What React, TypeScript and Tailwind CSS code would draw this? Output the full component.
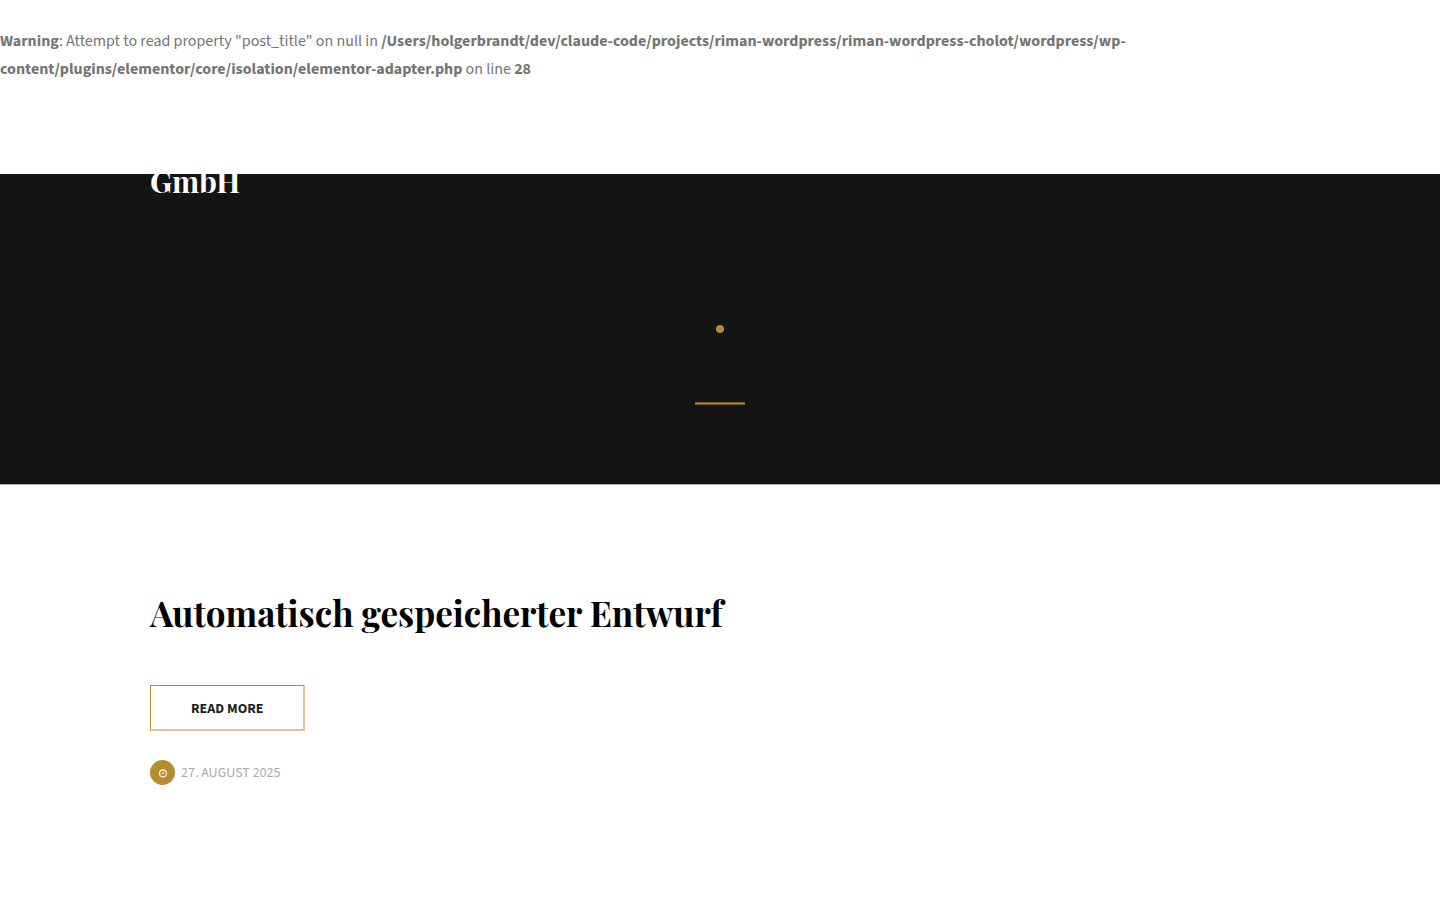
function ClockIcon() {
  return (
    <svg viewBox="0 0 10 10" className="size-2.5" fill="none" stroke="white" aria-hidden="true">
      <circle cx="5" cy="5.4" r="3.5" strokeWidth="1.3" />
      <path d="M5.2 3.4V5.7H3.6" strokeWidth="0.9" />
    </svg>
  );
}

function Warning() {
  return (
    <p className="min-h-[174px] pt-[27px] pr-[300px] text-base leading-7 text-[#757575]">
      <b>Warning</b>: Attempt to read property "post_title" on null in{" "}
      <b>
        /Users/holgerbrandt/dev/claude-code/projects/riman-wordpress/riman-wordpress-cholot/wordpress/wp-content/plugins/elementor/core/isolation/elementor-adapter.php
      </b>{" "}
      on line <b>28</b>
    </p>
  );
}

function Header() {
  return (
    <header className="overflow-hidden border-b border-[#ababab] bg-[#141414] pb-[79px]">
      <div className="mx-auto -mt-3 max-w-[1140px] font-['Playfair_Display','Liberation_Serif',serif] text-[30px] leading-[38px] font-bold text-white">
        <a href="#">GmbH</a>
      </div>
      <div className="mt-[125px] flex flex-col items-center gap-[69px]">
        <span className="size-2 rounded-full bg-[#b68c2f]" />
        <span className="h-[3px] w-[50px] border-y border-[#72591f] bg-[#b68c2f]" />
      </div>
    </header>
  );
}

function Post() {
  return (
    <article className="mx-auto flex max-w-[1140px] flex-col items-start pt-[104px]">
      <h2 className="font-['Playfair_Display','Liberation_Serif',serif] text-[35px] leading-12 font-bold text-black">
        <a href="#">Automatisch gespeicherter Entwurf</a>
      </h2>
      <a
        href="#"
        className="mt-12 border border-r-2 border-b-2 border-t-[#b68c2f] border-r-[#dbc597] border-b-[#dbc597] border-l-[#b68c2f] px-10 pt-[13px] pb-2.5 text-sm font-bold text-[#1f1f1f]"
      >
        READ MORE
      </a>
      <div className="mt-[29px] flex items-center gap-1.5 text-sm text-[#aaaaaa]">
        <span className="flex size-[25px] items-center justify-center rounded-full bg-[#b68c2f]">
          <ClockIcon />
        </span>
        <time dateTime="2025-08-27">27. AUGUST 2025</time>
      </div>
    </article>
  );
}

export default function App() {
  return (
    <div className="min-h-screen bg-white font-['Source_Sans_3','Source_Sans_Pro','Noto_Sans_CJK_SC',sans-serif]">
      <Warning />
      <Header />
      <main>
        <Post />
      </main>
    </div>
  );
}
